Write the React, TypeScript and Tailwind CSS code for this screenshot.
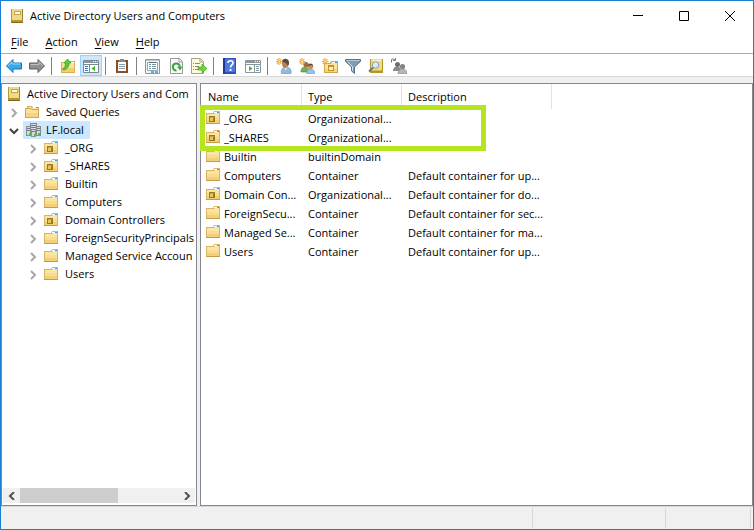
import { useState, type ReactNode } from "react";

type IconProps = { children: ReactNode };

function Icon({ children }: IconProps) {
    return (
        <svg width="16" height="16" viewBox="0 0 16 16" fill="none" className="block shrink-0" aria-hidden="true">
            {children}
        </svg>
    );
}

function BookIcon() {
    return (
        <Icon>
            <path d="M2 1h12v14H2z" fill="#d9bb52" />
            <path d="M3 1h10v11H3z" fill="#eedb86" />
            <path d="M2 1h1v14H2z" fill="#b8973a" />
            <path d="M13 1h1v14h-1z" fill="#9c7f2c" />
            <path d="M2 12h12v2H2z" fill="#b8952f" />
            <path d="M2 14h12v1H2z" fill="#80651a" />
            <path d="M5 3h7v4H5z" fill="#c2a448" />
            <path d="M6 4h5v2H6z" fill="#fffdf0" />
        </Icon>
    );
}

function FolderIcon({ ou = false }: { ou?: boolean }) {
    return (
        <Icon>
            <path d="M0 3h7l1-2h6v13H0z" fill="#d8b468" />
            <path d="M1 4h7l1-1h4v10H1z" fill="#fce5a2" />
            <path d="M1 7h12v3H1z" fill="#f9dc8f" />
            <path d="M1 10h12v3H1z" fill="#f3cf78" />
            <path d="M8 2h5v1H8z" fill="#fff" />
            <path d="M11 2h2v1h-2z" fill="#3d9be0" />
            <path d="M0 13h14v1H0z" fill="#c49c4c" />
            {ou && (
                <>
                    <path d="M3 6h6v6H3z" fill="#9a7726" />
                    <path d="M4 8h3v3H4z" fill="#e6c85f" />
                    <path d="M4 7h4v1H4z" fill="#c4a140" />
                </>
            )}
        </Icon>
    );
}

function QueryFolderIcon() {
    return (
        <Icon>
            <path d="M2 2h5l1 1h6v9H2z" fill="#d8b468" />
            <path d="M3 3h3l1 1h6v7H3z" fill="#fbe7ae" />
            <path d="M8 3h5v1H8z" fill="#fff" />
            <path d="M11 3h2v1h-2z" fill="#3d9be0" />
            <path d="M0 4h6l1 1h7v9H0z" fill="#d0a656" />
            <path d="M1 5h5l1 1h6v7H1z" fill="#fce19a" />
            <path d="M1 9h12v4H1z" fill="#f5d382" />
        </Icon>
    );
}

function DomainIcon() {
    return (
        <Icon>
            <path d="M5 1h7v9H5zM1 4h5v10H1zM11 4h5v10h-5z" fill="#838b90" />
            <path d="M6 2h5v8H6zM2 5h3v8H2zM12 5h3v8h-3z" fill="#d4dadd" />
            <path d="M6 3h5v1H6zM6 5h5v1H6zM2 6h3v1H2zM2 8h3v1H2zM12 6h3v1h-3zM12 8h3v1h-3z" fill="#727c82" />
            <path d="M6 7h5v8H6z" fill="#8a9297" />
            <path d="M7 8h3v6H7z" fill="#d4dadd" />
            <path d="M7 9h3v1H7z" fill="#727c82" />
            <path d="M4 11h2v2H4zM9 12h2v2H9zM13 11h2v2h-2z" fill="#39d51e" />
        </Icon>
    );
}

function ArrowIcon({ forward = false }: { forward?: boolean }) {
    return (
        <Icon>
            {forward ? (
                <>
                    <path d="M15.500 8L9 1.500v3.500H.5v6H9v3.500z" fill="#8f8f8f" stroke="#606060" />
                    <path d="M1.500 6.500H10V4l4 4" stroke="#c0c0c0" />
                </>
            ) : (
                <>
                    <path d="M.5 8L7 1.500v3.500h8.500v6H7v3.500z" fill="#35a9ec" stroke="#1f74b5" />
                    <path d="M2 8l4-4v2h8.500" stroke="#9adcfb" />
                </>
            )}
        </Icon>
    );
}

function UpFolderIcon() {
    return (
        <Icon>
            <path d="M1 4h6l1-1h7v12H1z" fill="#d5ae57" />
            <path d="M2 5h12v9H2z" fill="#fbe19a" />
            <path d="M2 10h12v4H2z" fill="#f2cd74" />
            <path d="M10 4h4v1h-4z" fill="#fff" />
            <path d="M2.500 11c2-1 3-3 3-6H4l3.500-4L11 5H9c0 4-2 6.500-5.500 7z" fill="#5fca33" stroke="#3a9a1c" strokeWidth=".7" />
        </Icon>
    );
}

function ConsoleTreeIcon() {
    return (
        <Icon>
            <path d="M.5 2.500h15v12H.5z" fill="#fff" stroke="#7d8790" />
            <path d="M1 3h14v2H1z" fill="#8b969f" />
            <path d="M10 3h1v1h-1zM12 3h1v1h-1zM14 3h1v1h-1z" fill="#fff" />
            <path d="M1 6.500h14M6.500 7v7" stroke="#7d8790" />
            <path d="M2 8.500h3M2 10.500h3M2 12.500h3" stroke="#2e7ca9" />
            <path d="M12 8v5l-3.500-2.500z" fill="#35b928" />
        </Icon>
    );
}

function ActionPaneIcon() {
    return (
        <Icon>
            <path d="M.5 2.500h15v12H.5z" fill="#fff" stroke="#8b959c" />
            <path d="M1 3h14v2H1z" fill="#8b969f" />
            <path d="M10 3h1v1h-1zM12 3h1v1h-1zM14 3h1v1h-1z" fill="#fff" />
            <path d="M1 6.500h14M9.500 7v7" stroke="#8b959c" />
            <path d="M11 8.500h3M11 10.500h3M11 12.500h3" stroke="#7f9aa9" />
            <path d="M4 8v5l3.500-2.500z" fill="#35b928" />
        </Icon>
    );
}

function ClipboardIcon() {
    return (
        <Icon>
            <path d="M2 2h12v13H2z" fill="#8a4f27" />
            <path d="M4 4h8v9H4z" fill="#fff" />
            <path d="M5 6.500h6M5 8.500h6M5 10.500h6" stroke="#8b9fae" />
            <path d="M5 2h1V1h4v1h1v2H5z" fill="#858c91" />
        </Icon>
    );
}

function PropertiesIcon() {
    return (
        <Icon>
            <path d="M.5 1.500h14v14H.5z" fill="#eef3f6" stroke="#8f979d" />
            <path d="M1 2h13v1H1z" fill="#c3cacf" />
            <path d="M2.500 4.500h10v8h-10z" fill="#fff" stroke="#9ba4aa" />
            <path d="M4 4.500h7" stroke="#5d6b75" />
            <path d="M4 6.500h2M7 6.500h4M4 8.500h2M7 8.500h4M4 10.500h2M7 10.500h4" stroke="#7895a8" />
            <path d="M6 13h3v2H6zM10 13h3v2h-3z" fill="#48bced" />
        </Icon>
    );
}

function RefreshIcon() {
    return (
        <Icon>
            <path d="M2.500.500h9l3 3v12h-12z" fill="#fafafa" stroke="#999" />
            <path d="M11 1v3h3" stroke="#999" />
            <path d="M11.800 8.500a3.500 3.500 0 1 0-3.300 4" stroke="#3aa53a" strokeWidth="2" />
            <path d="M9 8.500h5.500L12 12.500z" fill="#3aa53a" />
        </Icon>
    );
}

function ExportIcon() {
    return (
        <Icon>
            <path d="M.5.500h9l3 3v12H.5z" fill="#fdf9df" stroke="#a6a38c" />
            <path d="M9 1v3h3" stroke="#a6a38c" />
            <path d="M2 5.500h1M4 5.500h5M2 8.500h1M4 8.500h4M2 11.500h1M4 11.500h4" stroke="#8f8d7d" />
            <path d="M7 9h4V6l5 4.500-5 4.500v-3H7z" fill="#6fd33a" stroke="#3c9c1c" strokeWidth=".6" />
        </Icon>
    );
}

function HelpIcon() {
    return (
        <Icon>
            <path d="M1 0h13v16H1z" fill="#2f50b5" />
            <path d="M3 1h10v13H3z" fill="#4f78dc" />
            <path d="M1 0h2v16H1z" fill="#1d3a90" />
            <path d="M5.800 5c0-3 5.200-2.800 5.200 0 0 2-2.500 2-2.500 4.500" stroke="#fff" strokeWidth="1.600" />
            <path d="M7.500 11h2v2h-2z" fill="#fff" />
        </Icon>
    );
}

function Spark() {
    return (
        <>
            <path d="M3 0v7M0 3.500h6.500M.8 1.200l4.600 4.600M5.400 1.200L.8 5.800" stroke="#eda63a" strokeWidth="1.100" />
            <circle cx="3.100" cy="3.500" r="1.200" fill="#ffd875" />
        </>
    );
}

function NewUserIcon() {
    return (
        <Icon>
            <path d="M5.500 15.500c-1-4 1.500-6.500 5-6.500s5 3 4.500 6.500z" fill="#8fbbe0" stroke="#6496c2" strokeWidth=".7" />
            <path d="M8 9.500l2 3 1-3z" fill="#e8f2fa" />
            <path d="M6 5c0-4 6-4 6 0 0 3-1 5-3 5S6 8 6 5z" fill="#b98052" />
            <path d="M6 4C6-.5 13.500-.5 13 5c0 1.500-.5 2.500-1.500 3.500C11.500 6 10.500 4.500 6 4z" fill="#5e4a38" />
            <Spark />
        </Icon>
    );
}

function NewGroupIcon() {
    return (
        <Icon>
            <path d="M2 14c0-3.500 1.500-5 4-5s4 1.500 4 5z" fill="#73b04b" stroke="#4c8730" strokeWidth=".6" />
            <circle cx="7" cy="6.500" r="2.600" fill="#9a6c46" />
            <path d="M7.500 15.500c0-3 1.500-4.500 4-4.500s4.300 1.500 4.300 4.500z" fill="#91c2ea" stroke="#6496c2" strokeWidth=".6" />
            <circle cx="11.500" cy="8.500" r="2.600" fill="#c28e62" />
            <path d="M8.700 8.500c0-4 5.600-4 5.600 0-1-1.500-3-2-5.600 0z" fill="#624632" />
            <Spark />
        </Icon>
    );
}

function NewFolderIcon() {
    return (
        <Icon>
            <path d="M2 5h6l1-2h7v12H2z" fill="#d1a548" />
            <path d="M3 6h6l1-2h5v10H3z" fill="#fce29b" />
            <path d="M3 11h12v3H3z" fill="#f6d27a" />
            <path d="M10 4h5v1h-5z" fill="#fff" />
            <path d="M13 4h2v1h-2z" fill="#3d9be0" />
            <path d="M6 7h6v6H6z" fill="#c0912c" />
            <path d="M7 9h4v3H7z" fill="#fff1b5" />
            <Spark />
        </Icon>
    );
}

function FilterIcon() {
    return (
        <Icon>
            <path d="M.5 1.500h15v2L9.500 9v6.500L6.500 13V9l-6-5.500z" fill="#7f9db5" stroke="#56758f" />
            <path d="M3 4l4.500 4.500v4" stroke="#d1e2ee" />
            <path d="M1.500 2.500h13" stroke="#b5c9d8" />
        </Icon>
    );
}

function FindIcon() {
    return (
        <Icon>
            <path d="M2 1h13v14H2z" fill="#b8962f" />
            <path d="M3 1h11v11H3z" fill="#efdb82" />
            <path d="M5 2h8v1H5z" fill="#fff8d0" />
            <path d="M3 12h11v1H3z" fill="#d3b44e" />
            <circle cx="7.500" cy="7" r="3.300" fill="#d5ebf6" stroke="#8b9ca6" />
            <path d="M5 9.500L1 13.500" stroke="#6f7274" strokeWidth="1.800" />
        </Icon>
    );
}

function MembersIcon() {
    return (
        <Icon>
            <path d="M2 13c0-3 1.500-4.500 4-4.500s4 1.500 4 4.500z" fill="#8a8a8a" />
            <circle cx="6.500" cy="6.500" r="2.500" fill="#6e6e6e" />
            <path d="M7 15.500c0-3 2-4.500 4.500-4.500s4.500 1.500 4.500 4.500z" fill="#b8b8b8" stroke="#7d7d7d" strokeWidth=".6" />
            <circle cx="11.500" cy="8.500" r="2.600" fill="#858585" />
            <path d="M.5 4.500V2c0-1.500 2-1.500 3.500 0M4.500 0v2.500H2" stroke="#777" />
        </Icon>
    );
}

const toolbarGroups = [
    [
        { label: "Back", icon: <ArrowIcon /> },
        { label: "Forward", icon: <ArrowIcon forward /> },
    ],
    [
        { label: "Up one level", icon: <UpFolderIcon /> },
        { label: "Show/Hide Console Tree", icon: <ConsoleTreeIcon />, active: true },
    ],
    [{ label: "Paste", icon: <ClipboardIcon /> }],
    [
        { label: "Properties", icon: <PropertiesIcon /> },
        { label: "Refresh", icon: <RefreshIcon /> },
        { label: "Export List", icon: <ExportIcon /> },
    ],
    [
        { label: "Help", icon: <HelpIcon /> },
        { label: "Show/Hide Action Pane", icon: <ActionPaneIcon /> },
    ],
    [
        { label: "Create a new user", icon: <NewUserIcon /> },
        { label: "Create a new group", icon: <NewGroupIcon /> },
        { label: "Create a new organizational unit", icon: <NewFolderIcon /> },
        { label: "Filter options", icon: <FilterIcon /> },
        { label: "Find objects", icon: <FindIcon /> },
        { label: "Add to a group", icon: <MembersIcon /> },
    ],
];

const tree = [
    { name: "Active Directory Users and Com", level: 0, icon: <BookIcon /> },
    { name: "Saved Queries", level: 1, icon: <QueryFolderIcon /> },
    { name: "LF.local", level: 1, icon: <DomainIcon />, open: true },
    { name: "_ORG", level: 2, icon: <FolderIcon ou /> },
    { name: "_SHARES", level: 2, icon: <FolderIcon ou /> },
    { name: "Builtin", level: 2, icon: <FolderIcon /> },
    { name: "Computers", level: 2, icon: <FolderIcon /> },
    { name: "Domain Controllers", level: 2, icon: <FolderIcon ou /> },
    { name: "ForeignSecurityPrincipals", level: 2, icon: <FolderIcon /> },
    { name: "Managed Service Accoun", level: 2, icon: <FolderIcon /> },
    { name: "Users", level: 2, icon: <FolderIcon /> },
];

const objects = [
    { name: "_ORG", type: "Organizational...", description: "", ou: true },
    { name: "_SHARES", type: "Organizational...", description: "", ou: true },
    { name: "Builtin", type: "builtinDomain", description: "" },
    { name: "Computers", type: "Container", description: "Default container for up..." },
    { name: "Domain Con...", type: "Organizational...", description: "Default container for do...", ou: true },
    { name: "ForeignSecu...", type: "Container", description: "Default container for sec..." },
    { name: "Managed Se...", type: "Container", description: "Default container for ma..." },
    { name: "Users", type: "Container", description: "Default container for up..." },
];

function TitleBar() {
    return (
        <header className="flex h-[30px] items-center">
            <div className="flex flex-1 items-center gap-[5px] pl-2">
                <BookIcon />
                <h1>Active Directory Users and Computers</h1>
            </div>
            <button aria-label="Minimize" className="flex h-full w-[46px] items-center justify-center hover:bg-[#e5e5e5]">
                <svg width="10" height="10" viewBox="0 0 10 10" stroke="#000"><path d="M0 4.500h10" /></svg>
            </button>
            <button aria-label="Maximize" className="flex h-full w-[46px] items-center justify-center hover:bg-[#e5e5e5]">
                <svg width="10" height="10" viewBox="0 0 10 10" fill="none" stroke="#000"><path d="M.5.500h9v9h-9z" /></svg>
            </button>
            <button aria-label="Close" className="flex h-full w-[46px] items-center justify-center hover:bg-[#e81123]">
                <svg width="10" height="10" viewBox="0 0 10 10" stroke="#000"><path d="M0 0l10 10M10 0L0 10" /></svg>
            </button>
        </header>
    );
}

function ConsoleTree() {
    const [selected, setSelected] = useState("LF.local");

    return (
        <nav aria-label="Console tree" className="flex w-[196px] shrink-0 flex-col overflow-hidden border border-[#828790] bg-white p-px">
            <ul className="flex-1 overflow-hidden pl-px">
                {tree.map((node) => (
                    <li key={node.name} className="flex h-[18px] items-center">
                        {node.level === 2 && <span className="w-[19px] shrink-0" />}
                        {node.level > 0 && (
                            <button aria-label={`Toggle ${node.name}`} className="flex h-full w-[19px] shrink-0 items-center justify-center pt-0.5">
                                <svg width="10" height="10" viewBox="0 0 10 10" fill="none" strokeWidth="2">
                                    {node.open ? <path d="M1 3l4 4 4-4" stroke="#404040" /> : <path d="M3 1l4 4-4 4" stroke="#a6a6a6" />}
                                </svg>
                            </button>
                        )}
                        <button
                            onClick={() => setSelected(node.name)}
                            className={`flex h-full items-center gap-[5px] whitespace-nowrap pl-0.5 ${selected === node.name ? "bg-[#cce8ff] pr-1.5" : ""}`}
                        >
                            {node.icon}
                            {node.name}
                        </button>
                    </li>
                ))}
            </ul>
            {/* Horizontal scrollbar */}
            <div className="mb-px flex h-[15px] bg-[#f0f0f0]">
                <button aria-label="Scroll left" className="flex w-[17px] items-center justify-center">
                    <svg width="8" height="8" viewBox="0 0 8 8" fill="none" stroke="#505050" strokeWidth="2"><path d="M6 0L2 4l4 4" /></svg>
                </button>
                <div className="flex-1">
                    <div className="h-full w-[62%] bg-[#cdcdcd]" />
                </div>
                <button aria-label="Scroll right" className="flex w-[17px] items-center justify-center">
                    <svg width="8" height="8" viewBox="0 0 8 8" fill="none" stroke="#505050" strokeWidth="2"><path d="M2 0l4 4-4 4" /></svg>
                </button>
            </div>
        </nav>
    );
}

function ObjectList() {
    return (
        <main className="relative min-w-0 flex-1 border border-[#828790] bg-white">
            <table className="w-[350px] table-fixed border-separate border-spacing-0 text-left whitespace-nowrap">
                <colgroup>
                    <col className="w-[101px]" />
                    <col className="w-[100px]" />
                    <col className="w-[150px]" />
                </colgroup>
                <thead>
                    <tr className="h-[25px]">
                        {["Name", "Type", "Description"].map((heading, index) => (
                            <th
                                key={heading}
                                scope="col"
                                className={`border-r border-[#e2e2e2] p-0 font-normal ${index === 0 ? "pl-[7px]" : "pl-[6px]"}`}
                            >
                                {heading}
                            </th>
                        ))}
                    </tr>
                </thead>
                <tbody className="leading-[18px]">
                    {objects.map((object) => (
                        <tr key={object.name} className="h-[19px] align-top">
                            <td className="p-0 pt-px pl-[5px]">
                                <span className="flex gap-0.5">
                                    <FolderIcon ou={object.ou} />
                                    {object.name}
                                </span>
                            </td>
                            <td className="p-0 pt-px pl-[6px]">{object.type}</td>
                            <td className="p-0 pt-px pl-[6px]">{object.description}</td>
                        </tr>
                    ))}
                </tbody>
            </table>
            {/* Highlight frame round the two organizational units */}
            <div className="pointer-events-none absolute top-[21px] -left-px h-[46px] w-[286px] border-[5px] border-[#b5e61d]" />
        </main>
    );
}

export default function App() {
    return (
        <div className="flex min-h-screen flex-col border border-[#1a7fd0] bg-white font-['Open_Sans',sans-serif] text-[11px] leading-4 text-black">
            <TitleBar />
            <nav aria-label="Menu bar" className="flex h-[22px] items-center gap-px pl-0.5">
                {["File", "Action", "View", "Help"].map((item) => (
                    <button key={item} className="px-2 hover:bg-[#e5f3ff]">
                        <span className="underline underline-offset-2">{item[0]}</span>
                        {item.slice(1)}
                    </button>
                ))}
            </nav>
            <div role="toolbar" className="flex h-6 border-y border-t-[#a9acb5] border-b-[#d7d7d7] pt-px pl-0.5">
                {toolbarGroups.map((group, index) => (
                    <div key={index} className="flex">
                        {index > 0 && <span className="mt-0.5 mr-[5px] ml-0.5 h-[18px] w-px bg-[#808080]" />}
                        {group.map((tool) => (
                            <button
                                key={tool.label}
                                aria-label={tool.label}
                                className={`mr-px flex h-[21px] w-[22px] items-center justify-center border ${"active" in tool ? "border-[#99d1ff] bg-[#cce8ff]" : "border-transparent"}`}
                            >
                                {tool.icon}
                            </button>
                        ))}
                    </div>
                ))}
            </div>
            <div className="flex flex-1 gap-[3px] bg-[#f0f0f0] pt-1.5">
                <ConsoleTree />
                <ObjectList />
            </div>
            <footer className="flex h-[23px] border-t border-[#d7d7d7] bg-[#f0f0f0] py-px">
                <span className="flex-1 border-r border-[#d7d7d7]" />
                <span className="w-[133px] border-r border-[#d7d7d7]" />
                <span className="w-[85px] border-r border-[#d7d7d7]" />
                <span className="w-0.5" />
            </footer>
        </div>
    );
}
